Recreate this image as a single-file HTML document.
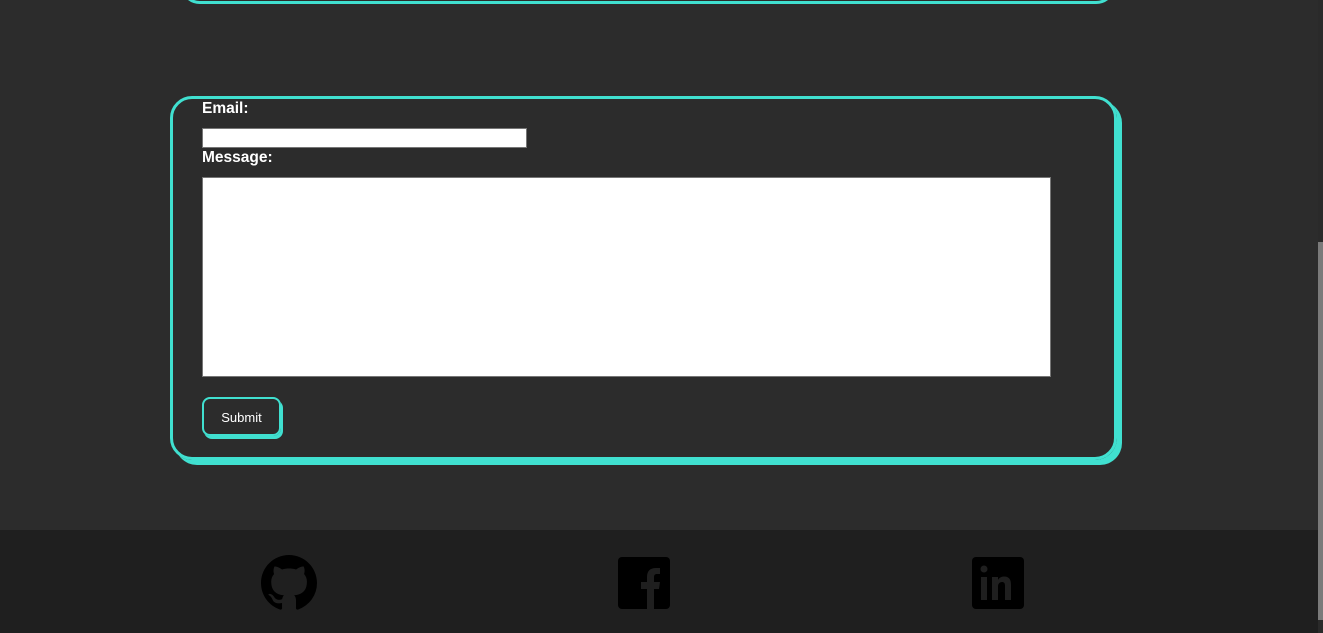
<!DOCTYPE html>
<html><head><style>
html,body{margin:0;padding:0;width:1323px;height:633px;overflow:hidden;background:#2c2c2c;font-family:"Liberation Sans",sans-serif;}
.top{position:absolute;left:180px;top:-40px;width:930px;height:38px;border:3px solid #40e0d0;border-radius:20px;}
.card{position:absolute;left:170px;top:96px;width:941px;height:358px;border:3px solid #40e0d0;border-radius:22px;box-shadow:5px 5px 0 #40e0d0;}
label{position:absolute;left:202px;color:#fff;font-weight:bold;font-size:15.5px;}
.in{position:absolute;background:#fff;border:1px solid #767676;box-sizing:border-box;}
.btn{position:absolute;left:202px;top:397px;width:79px;height:39px;box-sizing:border-box;border:2px solid #40e0d0;border-radius:8px;box-shadow:2px 3px 0 #40e0d0;color:#fff;font-size:13px;text-align:center;line-height:37px;}
.foot{position:absolute;left:0;top:530px;width:1318px;height:103px;background:#1f1f1f;}
.sb{position:absolute;left:1318px;top:0;width:5px;height:633px;background:#2a2a2a;}
.th{position:absolute;left:1318px;top:242px;width:5px;height:378px;background:#7a7a7a;}
</style></head><body>
<div class="top"></div>
<div class="card"></div>
<label style="top:100px">Email:</label>
<div class="in" style="left:202px;top:128px;width:325px;height:20px"></div>
<label style="top:149px">Message:</label>
<div class="in" style="left:202px;top:177px;width:849px;height:200px"></div>
<div class="btn">Submit</div>
<div class="foot">
<svg style="position:absolute;left:261px;top:25px" width="56" height="56" viewBox="0 0 16 16"><path fill="#000" d="M8 0C3.58 0 0 3.58 0 8c0 3.54 2.29 6.53 5.47 7.59.4.07.55-.17.55-.38 0-.19-.01-.82-.01-1.49-2.01.37-2.53-.49-2.69-.94-.09-.23-.48-.94-.82-1.13-.28-.15-.68-.52-.01-.53.63-.01 1.08.58 1.23.82.72 1.21 1.87.87 2.33.66.07-.52.28-.87.51-1.07-1.78-.2-3.64-.89-3.64-3.95 0-.87.31-1.59.82-2.15-.08-.2-.36-1.02.08-2.12 0 0 .67-.21 2.2.82.64-.18 1.32-.27 2-.27s1.36.09 2 .27c1.53-1.04 2.2-.82 2.2-.82.44 1.1.16 1.92.08 2.12.51.56.82 1.27.82 2.15 0 3.07-1.87 3.75-3.65 3.95.29.25.54.73.54 1.48 0 1.07-.01 1.93-.01 2.2 0 .21.15.46.55.38A8.013 8.013 0 0016 8c0-4.42-3.58-8-8-8z"/></svg>
<svg style="position:absolute;left:618px;top:27px" width="52" height="52" viewBox="0 0 52 52"><rect x="0" y="0" width="52" height="52" rx="4" fill="#000"/><path fill="#1f1f1f" d="M29 52V32h-6v-7h6v-5c0-6 3-9 9-9h4v6h-3c-2 0-3 1-3 3v5h6l-1 7h-5v20z"/></svg>
<svg style="position:absolute;left:972px;top:27px" width="52" height="52" viewBox="0 0 52 52"><rect width="52" height="52" rx="4" fill="#000"/><rect x="9" y="20" width="6" height="23" fill="#1f1f1f"/><circle cx="12" cy="12" r="3.5" fill="#1f1f1f"/><path fill="#1f1f1f" d="M20 20h6v3c1-2 3-3.5 6-3.5 5 0 7 3 7 8V43h-6V29c0-3-1-4-3-4s-4 1.5-4 4.5V43h-6z"/></svg>
</div>
<div class="sb"></div><div class="th"></div>
</body></html>
